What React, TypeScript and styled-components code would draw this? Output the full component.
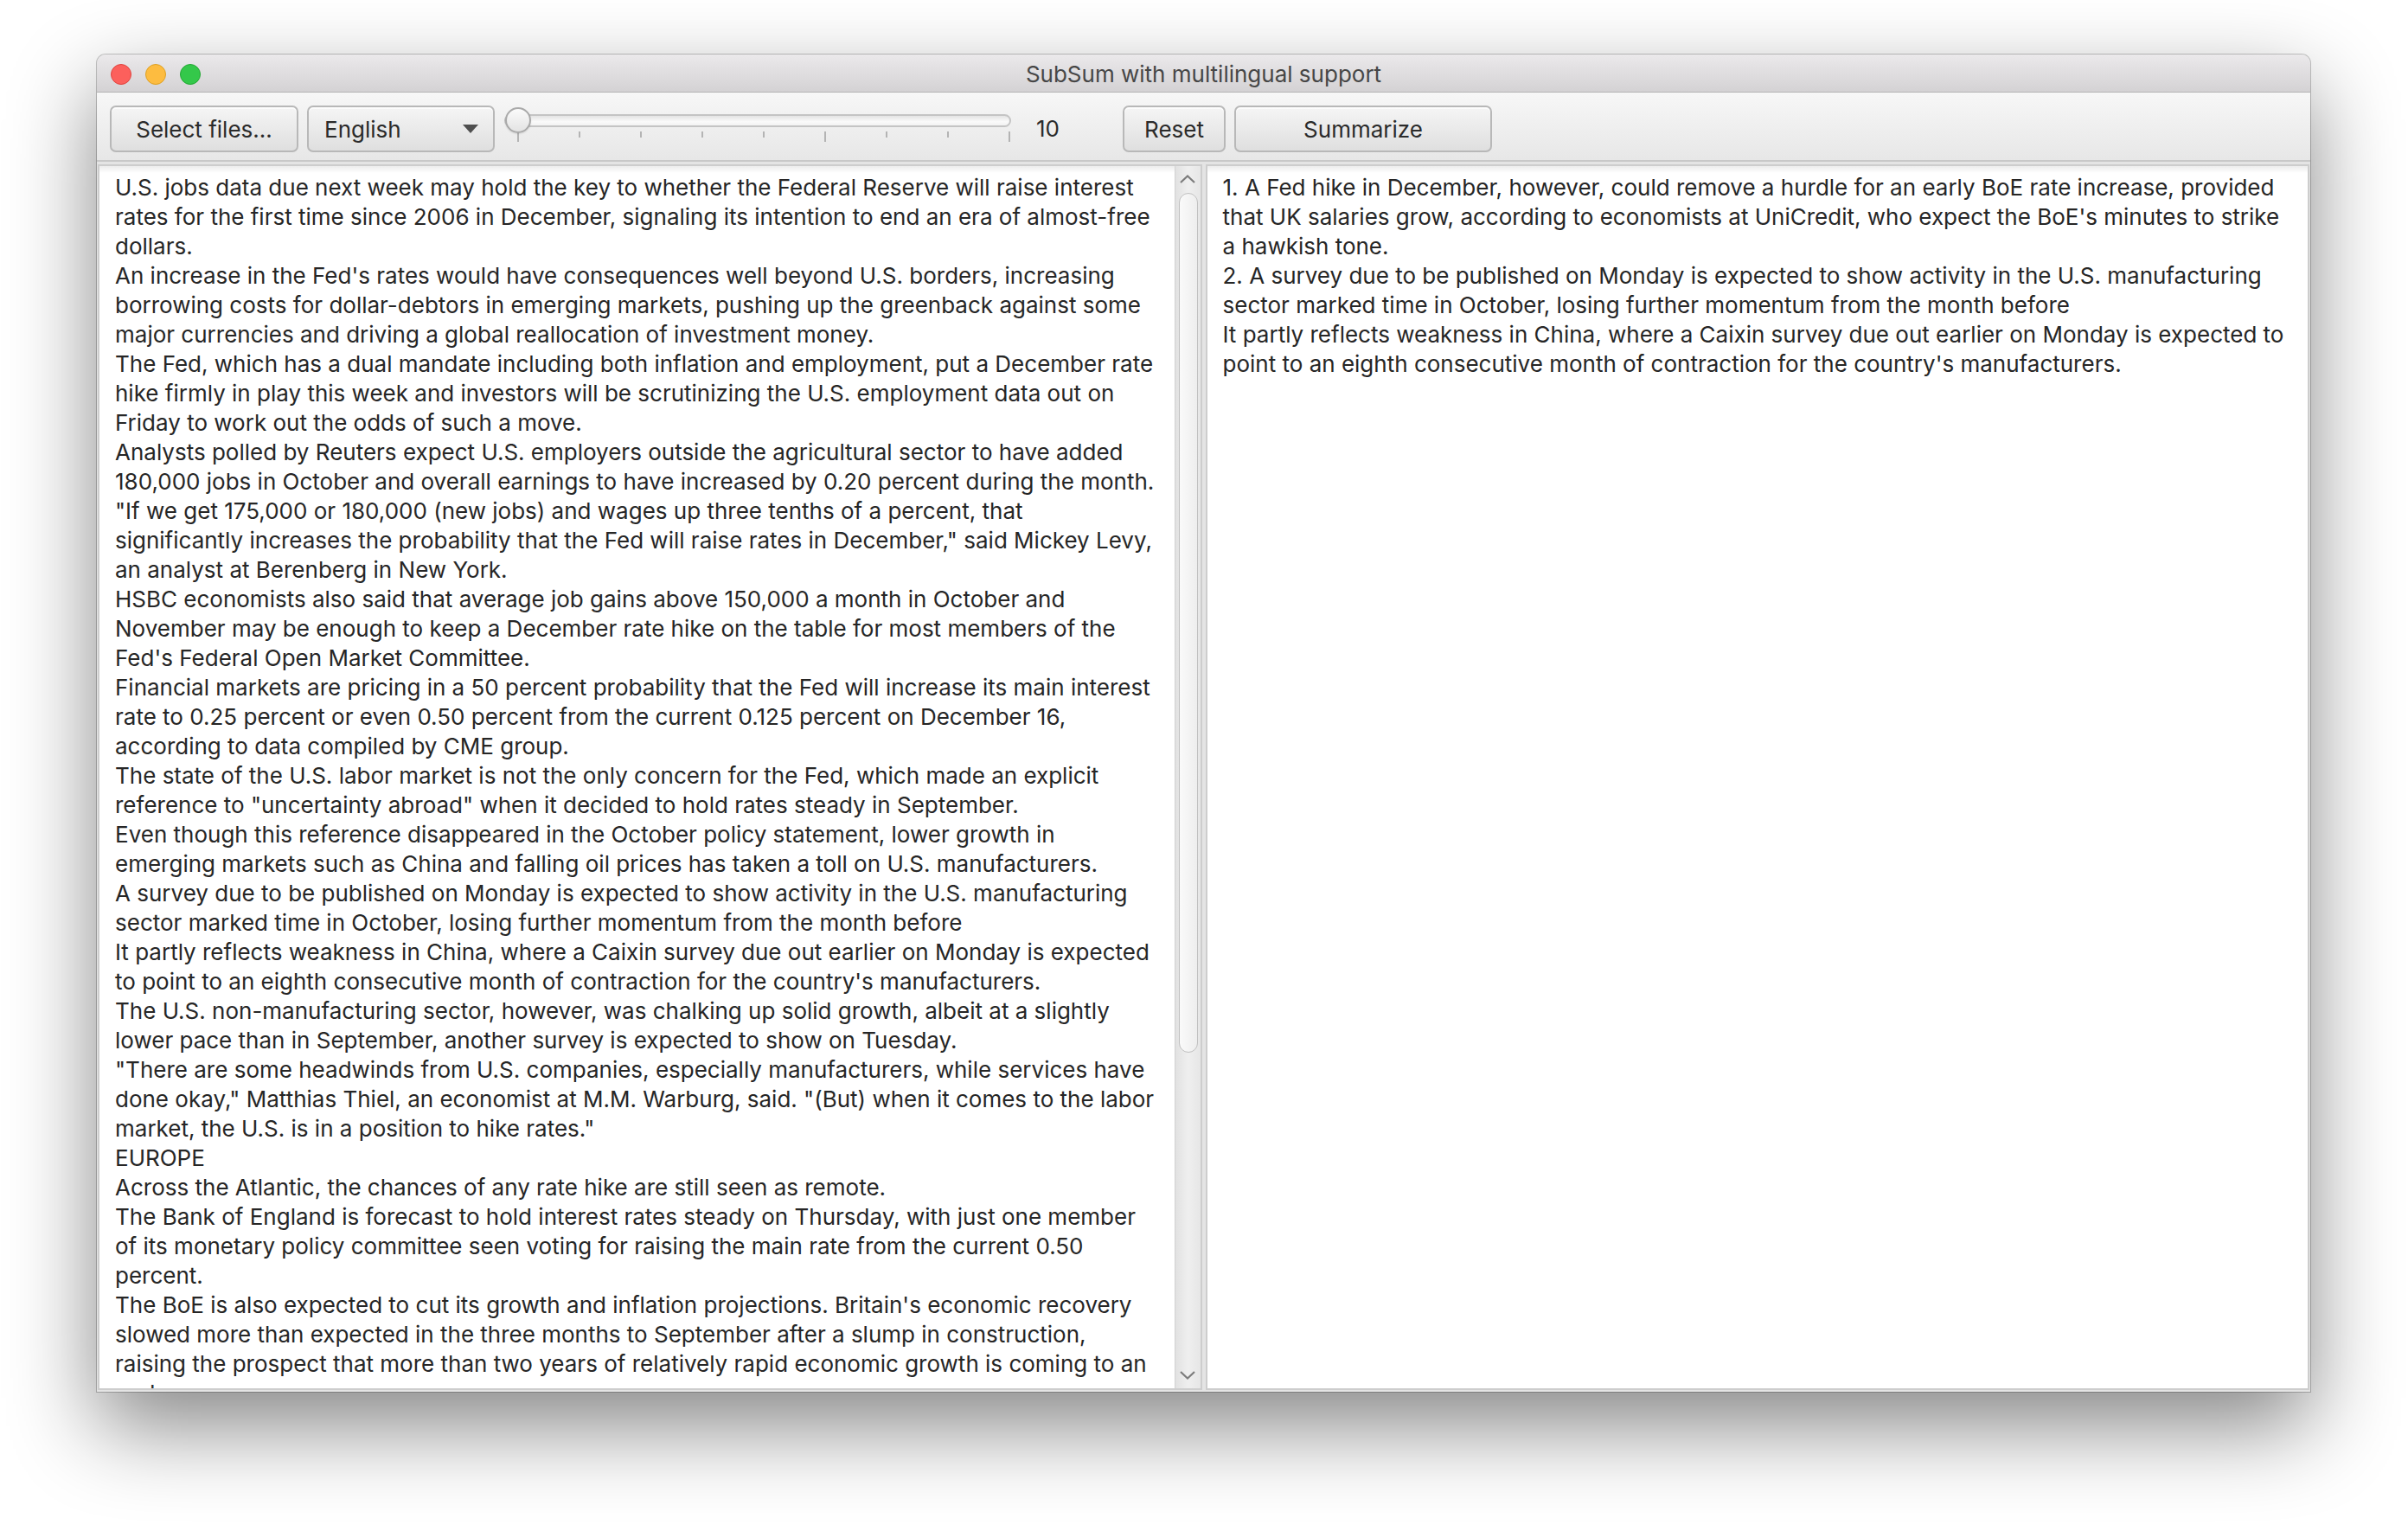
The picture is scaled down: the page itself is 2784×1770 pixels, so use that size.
import React from "react";
import styled, { createGlobalStyle } from "styled-components";

const FONT = `Inter, "Noto Sans", "Liberation Sans", sans-serif`;

const GlobalStyle = createGlobalStyle`
  * { box-sizing: border-box; }
  html, body { margin: 0; padding: 0; background: #ffffff; }
  body { font-family: ${FONT}; overflow: hidden; }
`;

const Desktop = styled.div`
  width: 2784px;
  height: 1770px;
  padding: 63px 0 0 112px;
  background: #ffffff;
`;

const Window = styled.div`
  width: 2559px;
  height: 1546px;
  display: flex;
  flex-direction: column;
  border-radius: 10px 10px 0 0;
  overflow: hidden;
  background: #e6e6e6;
  box-shadow: 0 0 0 1px rgba(0, 0, 0, 0.22), 0 40px 100px rgba(0, 0, 0, 0.48);
`;

const TitleBar = styled.div`
  flex: none;
  height: 44px;
  display: grid;
  grid-template-columns: 1fr auto 1fr;
  align-items: center;
  padding: 2px 16px 0;
  background: linear-gradient(to bottom, #ebe9eb, #d4d2d4);
  border-bottom: 1px solid #b4b4b4;
`;

const Lights = styled.div`
  display: flex;
  align-items: center;
  gap: 16px;
`;

const Light = styled.span<{ $fill: string; $edge: string }>`
  width: 24px;
  height: 24px;
  border-radius: 50%;
  background: ${(p) => p.$fill};
  border: 1px solid ${(p) => p.$edge};
`;

const Title = styled.div`
  font-size: 26px;
  line-height: 1;
  color: #474747;
  white-space: nowrap;
`;

const ToolBar = styled.div`
  flex: none;
  height: 80px;
  display: flex;
  align-items: center;
  gap: 10px;
  padding: 6px 15px 0;
  background: linear-gradient(to bottom, #f7f7f7, #e7e7e7);
  border-bottom: 2px solid #c8c8c8;
`;

const Button = styled.button<{ $w: number }>`
  flex: none;
  width: ${(p) => p.$w}px;
  height: 54px;
  padding: 0;
  display: flex;
  align-items: center;
  justify-content: center;
  font-family: ${FONT};
  font-size: 26px;
  color: #2b2b2b;
  border: 2px solid #b8b8b8;
  border-radius: 7px;
  background: linear-gradient(to bottom, #f5f5f5, #dfdfdf);
  box-shadow: inset 0 2px 0 rgba(255, 255, 255, 0.75);
`;

const Combo = styled(Button)`
  justify-content: space-between;
  padding: 0 17px 0 18px;
`;

const SliderBox = styled.div`
  flex: none;
  position: relative;
  width: 586px;
  height: 54px;
  margin-left: 1px;
  display: flex;
  flex-direction: column;
`;

const Track = styled.div`
  margin-top: 10px;
  height: 15px;
  border-radius: 8px;
  border: 2px solid #c4c4c4;
  background: linear-gradient(to bottom, #e4e4e4, #fafafa 60%, #f2f2f2);
`;

const TickRow = styled.div`
  display: flex;
  justify-content: space-between;
  align-items: flex-start;
  padding: 0 1px 0 15px;
  margin-top: 5px;
`;

const Tick = styled.span<{ $major: boolean }>`
  width: 2px;
  height: ${(p) => (p.$major ? 12 : 7)}px;
  background: #b4b4b4;
`;

const Thumb = styled.div`
  position: absolute;
  top: 2px;
  width: 30px;
  height: 30px;
  border-radius: 50%;
  border: 2px solid #a9a9a9;
  background: linear-gradient(to bottom, #fbfbfb, #e3e3e3);
  box-shadow: 0 1px 2px rgba(0, 0, 0, 0.12);
`;

const ValueLabel = styled.div`
  flex: none;
  width: 90px;
  margin-left: 19px;
  font-size: 26px;
  color: #2b2b2b;
  line-height: 54px;
`;

const Content = styled.div`
  flex: 1;
  min-height: 0;
  display: flex;
  gap: 4px;
  padding: 3px 1px 2px;
  background: #e4e4e4;
`;

const Pane = styled.div`
  flex: 1 1 0;
  min-width: 0;
  display: flex;
  border: 2px solid #cdcdcd;
  background: #ffffff;
`;

const TextBody = styled.div`
  flex: 1;
  min-width: 0;
  overflow: hidden;
  padding: 8px 18px 0;
  background: linear-gradient(to bottom, #ececec 0px, #ffffff 8px);
  font-size: 26px;
  line-height: 34px;
  color: #262626;
`;

const Line = styled.div`
  white-space: pre;
`;

const ScrollBar = styled.div`
  flex: none;
  width: 30px;
  display: flex;
  flex-direction: column;
  background: linear-gradient(to right, #e1e1e1, #efefef 50%, #e6e6e6);
  border-left: 1px solid #d2d2d2;
`;

const ArrowCell = styled.div<{ $h: number }>`
  flex: none;
  height: ${(p) => p.$h}px;
  display: flex;
  align-items: center;
  justify-content: center;
`;

const ThumbTrack = styled.div`
  flex: 1;
  min-height: 0;
  padding: 1px 3px 0 4px;
`;

const ScrollThumb = styled.div`
  width: 100%;
  border-radius: 11px;
  border: 1px solid #c0c0c0;
  background: linear-gradient(to right, #fafafa, #eeeeee);
`;

const SOURCE: string[][] = [
  [
    "U.S. jobs data due next week may hold the key to whether the Federal Reserve will raise interest",
    "rates for the first time since 2006 in December, signaling its intention to end an era of almost-free",
    "dollars.",
  ],
  [
    "An increase in the Fed's rates would have consequences well beyond U.S. borders, increasing",
    "borrowing costs for dollar-debtors in emerging markets, pushing up the greenback against some",
    "major currencies and driving a global reallocation of investment money.",
  ],
  [
    "The Fed, which has a dual mandate including both inflation and employment, put a December rate",
    "hike firmly in play this week and investors will be scrutinizing the U.S. employment data out on",
    "Friday to work out the odds of such a move.",
  ],
  [
    "Analysts polled by Reuters expect U.S. employers outside the agricultural sector to have added",
    "180,000 jobs in October and overall earnings to have increased by 0.20 percent during the month.",
  ],
  [
    "\"If we get 175,000 or 180,000 (new jobs) and wages up three tenths of a percent, that",
    "significantly increases the probability that the Fed will raise rates in December,\" said Mickey Levy,",
    "an analyst at Berenberg in New York.",
  ],
  [
    "HSBC economists also said that average job gains above 150,000 a month in October and",
    "November may be enough to keep a December rate hike on the table for most members of the",
    "Fed's Federal Open Market Committee.",
  ],
  [
    "Financial markets are pricing in a 50 percent probability that the Fed will increase its main interest",
    "rate to 0.25 percent or even 0.50 percent from the current 0.125 percent on December 16,",
    "according to data compiled by CME group.",
  ],
  [
    "The state of the U.S. labor market is not the only concern for the Fed, which made an explicit",
    "reference to \"uncertainty abroad\" when it decided to hold rates steady in September.",
  ],
  [
    "Even though this reference disappeared in the October policy statement, lower growth in",
    "emerging markets such as China and falling oil prices has taken a toll on U.S. manufacturers.",
  ],
  [
    "A survey due to be published on Monday is expected to show activity in the U.S. manufacturing",
    "sector marked time in October, losing further momentum from the month before",
  ],
  [
    "It partly reflects weakness in China, where a Caixin survey due out earlier on Monday is expected",
    "to point to an eighth consecutive month of contraction for the country's manufacturers.",
  ],
  [
    "The U.S. non-manufacturing sector, however, was chalking up solid growth, albeit at a slightly",
    "lower pace than in September, another survey is expected to show on Tuesday.",
  ],
  [
    "\"There are some headwinds from U.S. companies, especially manufacturers, while services have",
    "done okay,\" Matthias Thiel, an economist at M.M. Warburg, said. \"(But) when it comes to the labor",
    "market, the U.S. is in a position to hike rates.\"",
  ],
  ["EUROPE"],
  ["Across the Atlantic, the chances of any rate hike are still seen as remote."],
  [
    "The Bank of England is forecast to hold interest rates steady on Thursday, with just one member",
    "of its monetary policy committee seen voting for raising the main rate from the current 0.50",
    "percent.",
  ],
  [
    "The BoE is also expected to cut its growth and inflation projections. Britain's economic recovery",
    "slowed more than expected in the three months to September after a slump in construction,",
    "raising the prospect that more than two years of relatively rapid economic growth is coming to an",
    "end.",
  ],
];

const SUMMARY: string[][] = [
  [
    "1. A Fed hike in December, however, could remove a hurdle for an early BoE rate increase, provided",
    "that UK salaries grow, according to economists at UniCredit, who expect the BoE's minutes to strike",
    "a hawkish tone.",
  ],
  [
    "2. A survey due to be published on Monday is expected to show activity in the U.S. manufacturing",
    "sector marked time in October, losing further momentum from the month before",
  ],
  [
    "It partly reflects weakness in China, where a Caixin survey due out earlier on Monday is expected to",
    "point to an eighth consecutive month of contraction for the country's manufacturers.",
  ],
];

const Chevron = ({ up }: { up: boolean }) => (
  <svg width="18" height="10" viewBox="0 0 18 10">
    <polyline
      points={up ? "1,9 9,1.5 17,9" : "1,1 9,8.5 17,1"}
      fill="none"
      stroke="#7c7c7c"
      strokeWidth="2.2"
    />
  </svg>
);

const Paragraphs = ({ data }: { data: string[][] }) => (
  <>
    {data.map((para, i) => (
      <div key={i}>
        {para.map((l, j) => (
          <Line key={j}>{l}</Line>
        ))}
      </div>
    ))}
  </>
);

const TICKS = [true, false, false, false, false, true, false, false, true];

const Slider = ({ value, min, max }: { value: number; min: number; max: number }) => {
  const ratio = (value - min) / (max - min);
  return (
    <SliderBox>
      <Track />
      <TickRow>
        {TICKS.map((m, i) => (
          <Tick key={i} $major={m} />
        ))}
      </TickRow>
      <Thumb style={{ left: `${1 + ratio * 568}px` }} />
    </SliderBox>
  );
};

export default function App() {
  return (
    <>
      <GlobalStyle />
      <Desktop>
        <Window>
          <TitleBar>
            <Lights>
              <Light $fill="#fc605c" $edge="#e0443f" />
              <Light $fill="#fdbc40" $edge="#dea123" />
              <Light $fill="#34c84a" $edge="#24a834" />
            </Lights>
            <Title>SubSum with multilingual support</Title>
            <span />
          </TitleBar>
          <ToolBar>
            <Button $w={218}>Select files...</Button>
            <Combo $w={217}>
              <span>English</span>
              <svg width="18" height="10" viewBox="0 0 18 10">
                <polygon points="0,0 18,0 9,10" fill="#4f4f4f" />
              </svg>
            </Combo>
            <Slider value={10} min={10} max={50} />
            <ValueLabel>10</ValueLabel>
            <Button $w={119}>Reset</Button>
            <Button $w={298}>Summarize</Button>
          </ToolBar>
          <Content>
            <Pane>
              <TextBody>
                <Paragraphs data={SOURCE} />
              </TextBody>
              <ScrollBar>
                <ArrowCell $h={30}>
                  <Chevron up />
                </ArrowCell>
                <ThumbTrack>
                  <ScrollThumb style={{ height: `${Math.round(1353 * 0.735)}px` }} />
                </ThumbTrack>
                <ArrowCell $h={30}>
                  <Chevron up={false} />
                </ArrowCell>
              </ScrollBar>
            </Pane>
            <Pane>
              <TextBody>
                <Paragraphs data={SUMMARY} />
              </TextBody>
            </Pane>
          </Content>
        </Window>
      </Desktop>
    </>
  );
}
